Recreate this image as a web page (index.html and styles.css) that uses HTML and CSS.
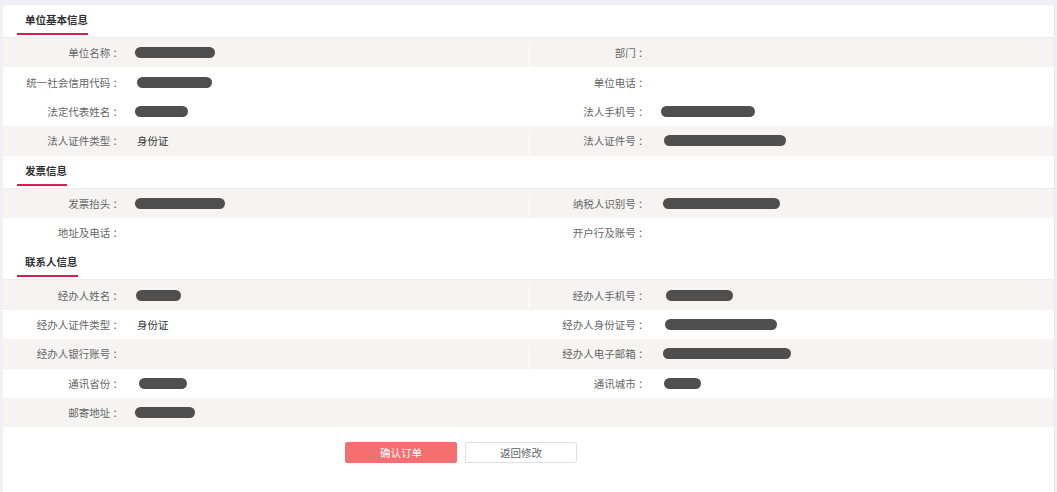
FILE: index.html
```html
<html>
    <head>
        <title>订单确认</title>
        <link rel="stylesheet" href="styles.css">
    </head>
    <body>
        <div class="card">
            <div class="sectionHead"><span class="sectionTitle">单位基本信息</span></div>
            <div class="row grey">
                <div class="half"><span class="label">单位名称 ：</span><span class="mask" style="width: 80px;"></span></div>
                <div class="half right"><span class="label">部门 ：</span></div>
            </div>
            <div class="row">
                <div class="half"><span class="label">统一社会信用代码 ：</span><span class="mask" style="width: 75px; margin-left: 2px;"></span></div>
                <div class="half right"><span class="label">单位电话 ：</span></div>
            </div>
            <div class="row">
                <div class="half"><span class="label">法定代表姓名 ：</span><span class="mask" style="width: 53px;"></span></div>
                <div class="half right"><span class="label">法人手机号 ：</span><span class="mask" style="width: 94px;"></span></div>
            </div>
            <div class="row grey">
                <div class="half"><span class="label">法人证件类型 ：</span><span class="value">身份证</span></div>
                <div class="half right"><span class="label">法人证件号 ：</span><span class="mask" style="width: 122px; margin-left: 3px;"></span></div>
            </div>

            <div class="sectionHead"><span class="sectionTitle">发票信息</span></div>
            <div class="row grey">
                <div class="half"><span class="label">发票抬头 ：</span><span class="mask" style="width: 90px;"></span></div>
                <div class="half right"><span class="label">纳税人识别号 ：</span><span class="mask" style="width: 117px; margin-left: 2px;"></span></div>
            </div>
            <div class="row">
                <div class="half"><span class="label">地址及电话 ：</span></div>
                <div class="half right"><span class="label">开户行及账号 ：</span></div>
            </div>

            <div class="sectionHead"><span class="sectionTitle">联系人信息</span></div>
            <div class="row grey">
                <div class="half"><span class="label">经办人姓名 ：</span><span class="mask" style="width: 45px; margin-left: 1px;"></span></div>
                <div class="half right"><span class="label">经办人手机号 ：</span><span class="mask" style="width: 67px; margin-left: 5px;"></span></div>
            </div>
            <div class="row">
                <div class="half"><span class="label">经办人证件类型 ：</span><span class="value">身份证</span></div>
                <div class="half right"><span class="label">经办人身份证号 ：</span><span class="mask" style="width: 112px; margin-left: 4px;"></span></div>
            </div>
            <div class="row grey">
                <div class="half"><span class="label">经办人银行账号 ：</span></div>
                <div class="half right"><span class="label">经办人电子邮箱 ：</span><span class="mask" style="width: 128px; margin-left: 2px;"></span></div>
            </div>
            <div class="row">
                <div class="half"><span class="label">通讯省份 ：</span><span class="mask" style="width: 48px; margin-left: 4px;"></span></div>
                <div class="half right"><span class="label">通讯城市 ：</span><span class="mask" style="width: 37px; margin-left: 3px;"></span></div>
            </div>
            <div class="row grey">
                <div class="half"><span class="label">邮寄地址 ：</span><span class="mask" style="width: 60px;"></span></div>
                <div class="half"></div>
            </div>

            <div class="buttons">
                <button class="btn btnPrimary">确认订单</button>
                <button class="btn">返回修改</button>
            </div>
        </div>
    </body>
</html>
```

FILE: styles.css
```css
body {
    margin: 0;
    background-color: #f0f0f5;
    font-family: "Noto Sans CJK SC", "Microsoft YaHei", sans-serif;
    font-size: 10.5px;
    overflow: hidden;
}
.card {
    margin: 5px 2px 0 3px;
    background-color: #fff;
    border-radius: 4px 4px 0 0;
    padding-bottom: 40px;
    border-right: 1px solid #e6e6ec;
}
.sectionHead {
    box-sizing: border-box;
    height: 33px;
    border-bottom: 1px solid #ebebf0;
    display: flex;
    align-items: flex-end;
}
.sectionTitle {
    margin: 0 0 2px 14px;
    padding: 0 0 6px 8px;
    line-height: 14px;
    font-weight: bold;
    color: #303133;
    border-bottom: 2px solid #d7204b;
}
.row {
    display: grid;
    grid-template-columns: 1fr 1fr;
    height: 29.4px;
}
.grey {
    background-color: #f5f4f2;
}
.half {
    display: flex;
    align-items: center;
    position: relative;
}
.right::before {
    content: "";
    position: absolute;
    left: 0;
    top: 6px;
    bottom: 0;
    width: 1px;
    background-color: #fff;
}
.label {
    width: 120px;
    text-align: right;
    color: #666;
    margin-right: 12px;
    flex-shrink: 0;
    white-space: nowrap;
}
.value {
    color: #333;
    margin-left: 2px;
}
.mask {
    display: inline-block;
    height: 11px;
    border-radius: 6px;
    background-color: #4f4f4f;
}
.buttons {
    display: flex;
    gap: 8px;
    padding: 15px 0 0 342px;
}
.btn {
    width: 112px;
    height: 21px;
    border: 1px solid #dcdfe6;
    border-radius: 2px;
    background-color: #fff;
    color: #606266;
    font-family: "Noto Sans CJK SC", "Microsoft YaHei", sans-serif;
    font-size: 10.5px;
    padding: 0;
}
.btnPrimary {
    background-color: #f46f6f;
    border-color: #f46f6f;
    color: #fff;
}
```
